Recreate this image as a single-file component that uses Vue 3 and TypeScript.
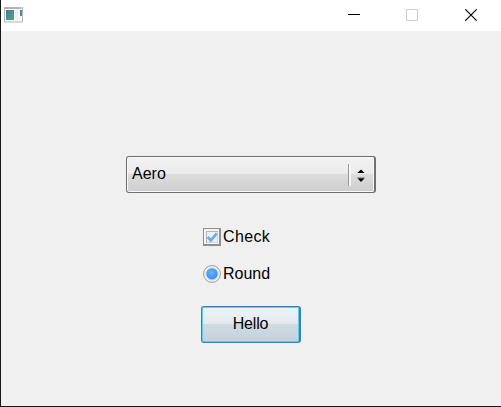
<script setup lang="ts">
import { ref } from 'vue'

const style = ref<string>('Aero')
const checked = ref<boolean>(true)
const selected = ref<boolean>(true)
</script>

<template>
  <div class="window">
    <header class="titlebar">
      <svg class="app-icon" width="19" height="16" viewBox="0 0 19 16">
        <defs>
          <linearGradient id="screen" x1="0" y1="0" x2="1" y2="1">
            <stop offset="0" stop-color="#4775a0" />
            <stop offset="1" stop-color="#50aa78" />
          </linearGradient>
        </defs>
        <rect x="0.5" y="0.5" width="18" height="14.5" fill="#f8f8f8" stroke="#b3b5b9" />
        <path d="M0 1h19" stroke="#b0b3b9" stroke-width="2" />
        <path d="M15 1h1M17 1h1" stroke="#e8eaef" />
        <rect x="2" y="3" width="8" height="10" fill="url(#screen)" />
        <rect x="11" y="3" width="3" height="10" fill="#f0f0f0" />
        <rect x="16" y="3" width="2" height="6" fill="url(#screen)" />
      </svg>
      <div class="controls">
        <button class="control" aria-label="Minimize">
          <svg width="12" height="12" viewBox="0 0 12 12"><path d="M0 5.5h12" stroke="#000" /></svg>
        </button>
        <button class="control" aria-label="Maximize" disabled>
          <svg width="12" height="12" viewBox="0 0 12 12"><rect x="0.5" y="0.5" width="11" height="11" fill="none" stroke="#ccc" /></svg>
        </button>
        <button class="control close" aria-label="Close">
          <svg width="12" height="12" viewBox="0 0 12 12"><path d="M0.3 0.3 11.7 11.7M11.7 0.3 0.3 11.7" stroke="#000" stroke-width="1.15" /></svg>
        </button>
      </div>
    </header>
    <main class="content">
      <button class="combo">
        <span class="combo-text">{{ style }}</span>
        <span class="divider"></span>
        <svg class="arrows" width="8" height="13" viewBox="0 0 8 13">
          <path d="M4 0.5 7.6 4H0.4ZM4 13 0.4 9.3H7.6Z" fill="#000" />
          <path d="M0.5 8.6h7" stroke="#888" stroke-width="0.8" />
        </svg>
      </button>
      <div class="options">
        <div class="option" role="checkbox" :aria-checked="checked" @click="checked = !checked">
          <svg width="18" height="18" viewBox="0 0 18 18">
            <path d="M0 0h18v18H0Z" fill="#909090" />
            <path d="M1 1h15v15H1Z" fill="#f4f4f4" />
            <rect x="3.5" y="3.5" width="11" height="11" fill="#eef0f3" stroke="#d3d6da" />
            <path d="M3.5 15V3.5H15" fill="none" stroke="#b0b4b9" />
            <path v-if="checked" d="M4.8 9 7.8 12.4 13.8 5.4" fill="none" stroke="#68aef4" stroke-width="2.9" />
          </svg>
          <span class="check-label">Check</span>
        </div>
        <div class="option" role="radio" :aria-checked="selected" @click="selected = true">
          <svg width="18" height="18" viewBox="0 0 18 18">
            <defs>
              <radialGradient id="dot" cx="0.45" cy="0.4" r="0.6">
                <stop offset="0" stop-color="#69b5ff" />
                <stop offset="1" stop-color="#3490f2" />
              </radialGradient>
            </defs>
            <circle cx="9" cy="9" r="8.4" fill="#f7f7f7" stroke="#999" />
            <circle cx="9" cy="9" r="6.3" fill="#d5e5f5" stroke="#b5c5d5" stroke-width="0.5" />
            <circle v-if="selected" cx="9" cy="8.8" r="5.6" fill="url(#dot)" />
          </svg>
          <span>Round</span>
        </div>
      </div>
      <button class="push">Hello</button>
    </main>
  </div>
</template>

<style>
body {
  margin: 0;
  overflow: hidden;
}
</style>

<style scoped>
.window {
  box-sizing: border-box;
  width: 501px;
  height: 407px;
  display: flex;
  flex-direction: column;
  border-left: 1px solid #161616;
  border-bottom: 1px solid #161616;
  background: #f0f0f0;
  color: #000;
  font: 16px/18px "Liberation Sans", Arial, sans-serif;
}
button {
  box-sizing: border-box;
  padding: 0;
  border: 0;
  background: none;
  color: inherit;
  font: inherit;
}
svg {
  display: block;
  flex: none;
}
.titlebar {
  display: flex;
  justify-content: space-between;
  height: 31px;
  background: #fff;
}
.app-icon {
  margin: 7px 0 0 3px;
}
.controls {
  display: flex;
  gap: 12px;
  margin-right: 7px;
}
.control {
  display: flex;
  justify-content: center;
  width: 46px;
  height: 30px;
  padding-top: 9px;
}
.close {
  margin-left: 1px;
}
.content {
  display: flex;
  flex: 1;
  flex-direction: column;
  align-items: center;
  padding-top: 125px;
}
.combo {
  display: flex;
  align-items: center;
  width: 250px;
  height: 37px;
  padding: 0 9px 0 5px;
  border: 1px solid #707070;
  border-right-width: 2px;
  border-radius: 3px;
  background: linear-gradient(#f2f2f2, #ebebeb 48%, #dddddd 49%, #cdcdcd);
  box-shadow: inset 0 0 0 1px #f8f8f8;
}
.combo-text {
  flex: 1;
  padding-bottom: 2px;
  text-align: left;
}
.divider {
  box-sizing: border-box;
  width: 3px;
  height: 22px;
  margin-right: 6px;
  border-left: 1px solid #999;
  background: #f6f6f6;
}
.arrows {
  margin-top: 1px;
}
.options {
  display: flex;
  flex-direction: column;
  gap: 19px;
  margin: 35px 0 23px;
  width: 97px;
}
.option {
  display: flex;
  gap: 2.5px;
  width: 70px;
  height: 18px;
}
.check-label {
  letter-spacing: 0.35px;
}
.push {
  width: 100px;
  height: 37px;
  padding-bottom: 2px;
  border: 1px solid #3c7fb1;
  border-right-width: 2px;
  border-radius: 3px;
  background: linear-gradient(#edf2f5, #e3eaef 48%, #d0dbe2 49%, #c3d2da);
  box-shadow: inset 0 0 0 1px #5fcdec;
  letter-spacing: -0.2px;
}
</style>
